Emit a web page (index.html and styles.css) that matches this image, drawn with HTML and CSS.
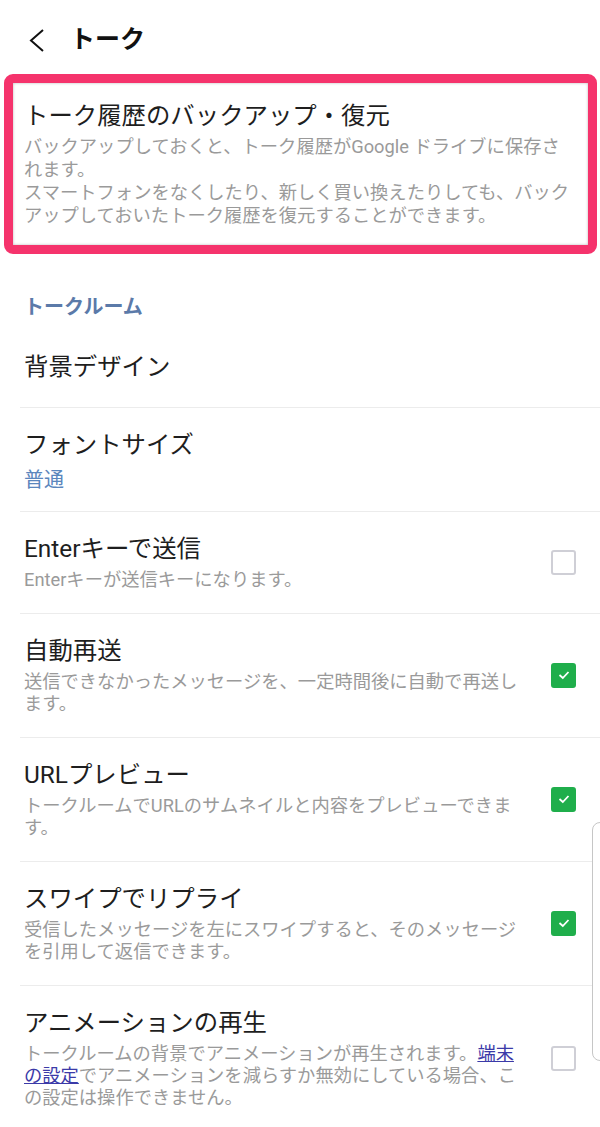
FILE: index.html
```html
<!DOCTYPE html>
<html lang="ja">
<head>
<meta charset="utf-8">
<title>トーク</title>
<link rel="stylesheet" href="styles.css">
</head>
<body>
<header class="topbar">
  <svg class="back" width="16" height="24" viewBox="0 0 16 24"><polyline points="14,2 2,12.5 14,23" fill="none" stroke="#111" stroke-width="2" stroke-linejoin="miter"/></svg>
  <h1 class="page-title">トーク</h1>
</header>

<section class="backup">
  <div class="item-title">トーク履歴のバックアップ・復元</div>
  <div class="item-desc">バックアップしておくと、トーク履歴がGoogle ドライブに保存さ<br>れます。<br>スマートフォンをなくしたり、新しく買い換えたりしても、バック<br>アップしておいたトーク履歴を復元することができます。</div>
</section>

<h2 class="section-head">トークルーム</h2>

<div class="list">
  <div class="row single">
    <div class="text"><div class="item-title">背景デザイン</div></div>
  </div>
  <div class="row valued">
    <div class="text">
      <div class="item-title">フォントサイズ</div>
      <div class="item-value">普通</div>
    </div>
  </div>
  <div class="row">
    <div class="text">
      <div class="item-title">Enterキーで送信</div>
      <div class="item-desc">Enterキーが送信キーになります。</div>
    </div>
    <span class="check"></span>
  </div>
  <div class="row">
    <div class="text">
      <div class="item-title">自動再送</div>
      <div class="item-desc">送信できなかったメッセージを、一定時間後に自動で再送し<br>ます。</div>
    </div>
    <span class="check on"><svg width="12" height="10" viewBox="0 0 12 10"><polyline points="1.5,5 4.8,8 10.5,2" fill="none" stroke="#fff" stroke-width="1.8"/></svg></span>
  </div>
  <div class="row">
    <div class="text">
      <div class="item-title">URLプレビュー</div>
      <div class="item-desc">トークルームでURLのサムネイルと内容をプレビューできま<br>す。</div>
    </div>
    <span class="check on"><svg width="12" height="10" viewBox="0 0 12 10"><polyline points="1.5,5 4.8,8 10.5,2" fill="none" stroke="#fff" stroke-width="1.8"/></svg></span>
  </div>
  <div class="row">
    <div class="text">
      <div class="item-title">スワイプでリプライ</div>
      <div class="item-desc">受信したメッセージを左にスワイプすると、そのメッセージ<br>を引用して返信できます。</div>
    </div>
    <span class="check on"><svg width="12" height="10" viewBox="0 0 12 10"><polyline points="1.5,5 4.8,8 10.5,2" fill="none" stroke="#fff" stroke-width="1.8"/></svg></span>
  </div>
  <div class="row last">
    <div class="text">
      <div class="item-title">アニメーションの再生</div>
      <div class="item-desc">トークルームの背景でアニメーションが再生されます。<a class="link" href="#">端末<br>の設定</a>でアニメーションを減らすか無効にしている場合、こ<br>の設定は操作できません。</div>
    </div>
    <span class="check"></span>
  </div>
</div>

<div class="edge-handle"></div>
</body>
</html>
```

FILE: styles.css
```css
html, body {
  margin: 0;
  padding: 0;
  background: #fff;
}
body {
  font-family: Roboto, "Noto Sans CJK JP", sans-serif;
  color: #1e1e1e;
  width: 600px;
  height: 1127px;
  overflow: hidden;
  position: relative;
}
.topbar {
  height: 68px;
  padding-top: 6px;
  display: flex;
  align-items: center;
  padding-left: 29px;
}
.back {
  display: block;
}
.page-title {
  margin: 0 0 0 25px;
  font-size: 25px;
  font-weight: 700;
  color: #111;
  line-height: 32px;
}
.backup {
  margin: 0 3px 0 4px;
  border: 9px solid #f5336c;
  border-radius: 9px;
  box-shadow: inset 0 0 3px rgba(0, 0, 0, 0.28);
  padding: 17px 6px 18px 11px;
}
.item-title {
  font-size: 24.4px;
  line-height: 32px;
  color: #1e1e1e;
}
.item-desc {
  font-size: 18.3px;
  line-height: 22px;
  color: #9a9a9a;
  margin-top: 4px;
  white-space: nowrap;
}
.backup .item-desc {
  margin-top: 3px;
  line-height: 23px;
}
.item-value {
  font-size: 20px;
  line-height: 24px;
  margin-top: 7px;
  color: #5b86bd;
}
.section-head {
  margin: 39px 0 9px 24px;
  font-size: 20px;
  line-height: 28px;
  font-weight: 700;
  color: #5b7aa9;
}
.list {
  margin-left: 20px;
}
.row {
  display: flex;
  align-items: center;
  padding: 21px 0 22px 4px;
  border-bottom: 1px solid #ececec;
}
.row.single {
  padding-bottom: 24px;
}
.row.valued {
  padding-bottom: 19px;
}
.row.last {
  border-bottom: none;
}
.text {
  width: 496px;
  flex: none;
}
.check {
  margin-left: 31px;
  width: 25px;
  height: 25px;
  box-sizing: border-box;
  border: 2px solid #cfcfd6;
  border-radius: 3px;
  display: flex;
  align-items: center;
  justify-content: center;
  flex: none;
}
.check.on {
  background: #1fae4b;
  border-color: #1fae4b;
}
.link {
  color: #3b3aa8;
  text-decoration: underline;
}
.edge-handle {
  position: absolute;
  right: -1px;
  top: 822px;
  width: 7px;
  height: 237px;
  border: 1px solid #c6c6c6;
  border-radius: 8px 0 0 8px;
  background: #fff;
}
```
